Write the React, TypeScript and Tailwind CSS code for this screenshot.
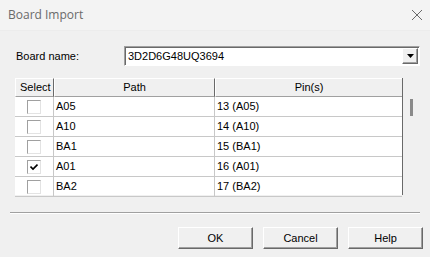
import React from "react";

const rows = [
  { path: "A05", pin: "13 (A05)", checked: false },
  { path: "A10", pin: "14 (A10)", checked: false },
  { path: "BA1", pin: "15 (BA1)", checked: false },
  { path: "A01", pin: "16 (A01)", checked: true },
  { path: "BA2", pin: "17 (BA2)", checked: false },
];

function Check({ checked }: { checked: boolean }) {
  return (
    <div className="w-[14px] h-[14px] bg-white border-t border-l border-t-[#a0a0a0] border-l-[#a0a0a0] border-b border-r border-b-[#e3e3e3] border-r-[#e3e3e3] flex items-center justify-center">
      {checked && (
        <svg width="8" height="8" viewBox="0 0 8 8">
          <path d="M0.5 3.5 L3 6 L7.5 1.5" stroke="#000" strokeWidth="1.6" fill="none" />
        </svg>
      )}
    </div>
  );
}

function Btn({ label }: { label: string }) {
  return (
    <div className="w-[75px] h-[22px] bg-[#f0f0f0] border-t border-l border-t-white border-l-white border-b border-r border-b-[#696969] border-r-[#696969] shadow-[inset_-1px_-1px_0_#a0a0a0] flex items-center justify-center text-[11px] text-black">
      {label}
    </div>
  );
}

export default function App() {
  return (
    <div
      className="w-[430px] h-[257px] bg-[#f0f0f0] overflow-hidden flex flex-col"
      style={{ fontFamily: '"Liberation Sans", Arial, sans-serif' }}
    >
      {/* Title bar */}
      <div className="h-[31px] bg-[#f3f3f3] flex items-center justify-between pl-[8px] pr-[7px] border-b border-[#ececec]">
        <span
          className="text-[12px] text-[#6a6a6a]"
          style={{ fontFamily: '"Open Sans", "Noto Sans", sans-serif' }}
        >
          Board Import
        </span>
        <svg width="12" height="12" viewBox="0 0 12 12">
          <path d="M1 1 L11 11 M11 1 L1 11" stroke="#6a6a6a" strokeWidth="1" />
        </svg>
      </div>

      {/* Board name row */}
      <div className="flex items-center mt-[15px] ml-[16px] h-[20px]">
        <span className="w-[108px] text-[11px] text-black">Board name:</span>
        <div className="w-[296px] h-[20px] bg-white border-t border-l border-t-[#a0a0a0] border-l-[#a0a0a0] border-b border-r border-b-white border-r-white shadow-[inset_1px_1px_0_#696969] flex items-center justify-between pl-[3px] pr-[1px]">
          <span className="text-[11px] text-black">3D2D6G48UQ3694</span>
          <div className="w-[16px] h-[16px] bg-[#f0f0f0] border-t border-l border-t-white border-l-white border-b border-r border-b-[#696969] border-r-[#696969] shadow-[inset_-1px_-1px_0_#a0a0a0] flex items-center justify-center">
            <svg width="7" height="4" viewBox="0 0 7 4">
              <path d="M0 0 H7 L3.5 4 Z" fill="#000" />
            </svg>
          </div>
        </div>
      </div>

      {/* Grid */}
      <div className="mt-[12px] ml-[15px] w-[405px] h-[117px] flex">
        <div className="w-[388px] flex flex-col bg-white border-r border-[#696969]">
          {/* header */}
          <div className="flex h-[19px] shrink-0 bg-[#f0f0f0] text-[11px] text-black">
            <div className="w-[39px] flex items-center pl-[4px] border-t border-l border-t-white border-l-white border-r border-b border-r-[#696969] border-b-[#a0a0a0]">
              Select
            </div>
            <div className="w-[161px] flex items-center justify-center border-t border-l border-t-white border-l-white border-r border-b border-r-[#696969] border-b-[#a0a0a0]">
              Path
            </div>
            <div className="flex-1 flex items-center justify-center border-t border-l border-t-white border-l-white border-b border-b-[#a0a0a0]">
              Pin(s)
            </div>
          </div>
          {rows.map((r) => (
            <div key={r.path} className="flex h-[20px] shrink-0 border-b border-[#c8c8c8] text-[11px] text-black">
              <div className="w-[39px] flex items-center justify-center border-r border-[#c8c8c8]">
                <Check checked={r.checked} />
              </div>
              <div className="w-[161px] flex items-center pl-[2px] border-r border-[#c8c8c8]">{r.path}</div>
              <div className="flex-1 flex items-center pl-[2px]">{r.pin}</div>
            </div>
          ))}
        </div>
        <div className="flex-1 flex justify-center pt-[21px]">
          <div className="w-[3px] h-[17px] bg-[#8a8a8a]" />
        </div>
      </div>

      {/* Separator */}
      <div className="mt-[17px] ml-[10px] w-[410px] h-[2px] border-t border-[#a0a0a0] border-b border-b-white" />

      {/* Buttons */}
      <div className="flex justify-end gap-[10px] mt-[13px] mr-[7px]">
        <Btn label="OK" />
        <Btn label="Cancel" />
        <Btn label="Help" />
      </div>
    </div>
  );
}
